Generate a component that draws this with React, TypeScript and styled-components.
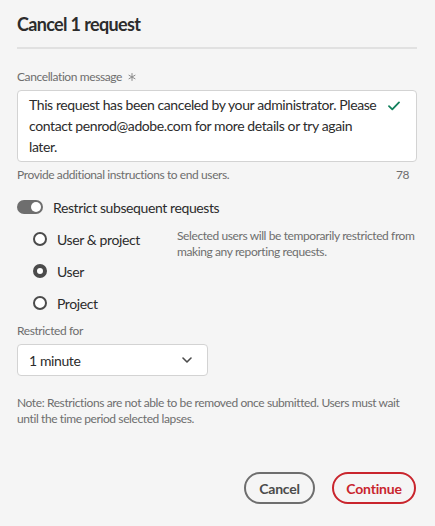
import React from "react";
import styled, { createGlobalStyle } from "styled-components";

const Global = createGlobalStyle`
  html, body { margin: 0; padding: 0; background: #f5f5f5; }
  body { font-family: Lato, "Noto Sans", sans-serif; color: #2c2c2c; letter-spacing: -0.4px; }
  * { box-sizing: border-box; }
`;

const Dialog = styled.div`
  width: 435px;
  height: 526px;
  padding: 12px 18px 0 17px;
  display: flex;
  flex-direction: column;
  background: #f5f5f5;
`;

const Title = styled.h1`
  margin: 0;
  font-size: 18px;
  line-height: 24px;
  font-weight: 700;
  letter-spacing: -0.65px;
  color: #2c2c2c;
`;

const Divider = styled.div`
  margin-top: 11px;
  height: 2px;
  background: #e1e1e1;
`;

const Label = styled.div<{ $top: number }>`
  margin-top: ${(p) => p.$top}px;
  font-size: 12px;
  line-height: 16px;
  color: #6e6e6e;
  display: flex;
  align-items: center;
`;

const Asterisk = styled.svg`
  margin-left: 6px;
  flex: none;
`;

const TextArea = styled.div`
  margin-top: 5px;
  height: 72px;
  background: #fff;
  border: 1px solid #d3d3d3;
  border-radius: 4px;
  padding: 3px 16px 4px 11px;
  display: flex;
  justify-content: space-between;
`;

const AreaText = styled.div`
  font-size: 14px;
  line-height: 21px;
  white-space: pre;
  color: #2c2c2c;
`;

const Check = styled.svg`
  flex: none;
  margin-top: 7px;
`;

const HelpRow = styled.div`
  margin-top: 5px;
  display: flex;
  justify-content: space-between;
  padding-right: 8px;
  font-size: 12px;
  line-height: 16px;
  color: #6e6e6e;
`;

const SwitchRow = styled.div`
  margin-top: 14px;
  height: 20px;
  display: flex;
  align-items: center;
  gap: 10px;
  font-size: 14px;
`;

const Track = styled.div`
  width: 26px;
  height: 14px;
  border-radius: 7px;
  background: #6e6e6e;
  display: flex;
  align-items: center;
  justify-content: flex-end;
  padding: 0 2px;
`;

const Knob = styled.div`
  width: 10px;
  height: 10px;
  border-radius: 50%;
  background: #fff;
`;

const RadioSection = styled.div`
  margin-top: 6px;
  display: grid;
  grid-template-columns: 160px 1fr;
`;

const RadioList = styled.div`
  display: flex;
  flex-direction: column;
  padding-left: 16px;
`;

const RadioRow = styled.div`
  height: 32px;
  display: flex;
  align-items: center;
  gap: 10px;
  font-size: 14px;
`;

const RadioDot = styled.div<{ $on?: boolean }>`
  width: 14px;
  height: 14px;
  border-radius: 50%;
  background: #fff;
  border: ${(p) => (p.$on ? "4px solid #4b4b4b" : "2px solid #4b4b4b")};
`;

const Description = styled.div`
  padding-top: 5px;
  font-size: 12px;
  line-height: 16px;
  white-space: nowrap;
  color: #6e6e6e;
`;

const Picker = styled.div`
  margin-top: 5px;
  width: 191px;
  height: 32px;
  background: #fff;
  border: 1px solid #d3d3d3;
  border-radius: 4px;
  padding: 0 15px 0 11px;
  display: flex;
  align-items: center;
  justify-content: space-between;
  font-size: 14px;
`;

const Note = styled.div`
  margin-top: 19px;
  font-size: 12px;
  line-height: 16px;
  white-space: nowrap;
  color: #6e6e6e;
`;

const Footer = styled.div`
  margin-top: 45px;
  display: flex;
  justify-content: flex-end;
  gap: 17px;
  padding-right: 1px;
`;

const Button = styled.button<{ $danger?: boolean }>`
  height: 32px;
  width: ${(p) => (p.$danger ? 84 : 71)}px;
  padding: 0;
  border-radius: 16px;
  background: transparent;
  border: 2px solid ${(p) => (p.$danger ? "#c9252d" : "#6e6e6e")};
  color: ${(p) => (p.$danger ? "#c9252d" : "#4b4b4b")};
  font-family: inherit;
  letter-spacing: -0.2px;
  font-size: 14px;
  font-weight: 700;
`;

export default function App() {
  return (
    <>
      <Global />
      <Dialog>
        <Title>Cancel 1 request</Title>
        <Divider />
        <Label $top={20}>
          Cancellation message
          <Asterisk width="8" height="8" viewBox="0 0 8 8">
            <path
              d="M4 0.5 V7.5 M0.97 2.25 L7.03 5.75 M0.97 5.75 L7.03 2.25"
              stroke="#8a8a8a"
              strokeWidth="1"
              strokeLinecap="round"
            />
          </Asterisk>
        </Label>
        <TextArea>
          <AreaText>
            {"This request has been canceled by your administrator. Please\ncontact penrod@adobe.com for more details or try again\nlater."}
          </AreaText>
          <Check width="12" height="10" viewBox="0 0 12 10">
            <path d="M1 5.2 L4.3 8.4 L11 1.4" fill="none" stroke="#12805c" strokeWidth="1.8" strokeLinecap="round" strokeLinejoin="round" />
          </Check>
        </TextArea>
        <HelpRow>
          <span>Provide additional instructions to end users.</span>
          <span>78</span>
        </HelpRow>
        <SwitchRow>
          <Track>
            <Knob />
          </Track>
          <span>Restrict subsequent requests</span>
        </SwitchRow>
        <RadioSection>
          <RadioList>
            <RadioRow>
              <RadioDot />
              <span>User &amp; project</span>
            </RadioRow>
            <RadioRow>
              <RadioDot $on />
              <span>User</span>
            </RadioRow>
            <RadioRow>
              <RadioDot />
              <span>Project</span>
            </RadioRow>
          </RadioList>
          <Description>
            Selected users will be temporarily restricted from
            <br />
            making any reporting requests.
          </Description>
        </RadioSection>
        <Label $top={4}>Restricted for</Label>
        <Picker>
          <span>1 minute</span>
          <svg width="10" height="6" viewBox="0 0 10 6">
            <path d="M1 1 L5 5 L9 1" fill="none" stroke="#4b4b4b" strokeWidth="1.6" strokeLinecap="round" strokeLinejoin="round" />
          </svg>
        </Picker>
        <Note>
          Note: Restrictions are not able to be removed once submitted. Users must wait
          <br />
          until the time period selected lapses.
        </Note>
        <Footer>
          <Button>Cancel</Button>
          <Button $danger>Continue</Button>
        </Footer>
      </Dialog>
    </>
  );
}
